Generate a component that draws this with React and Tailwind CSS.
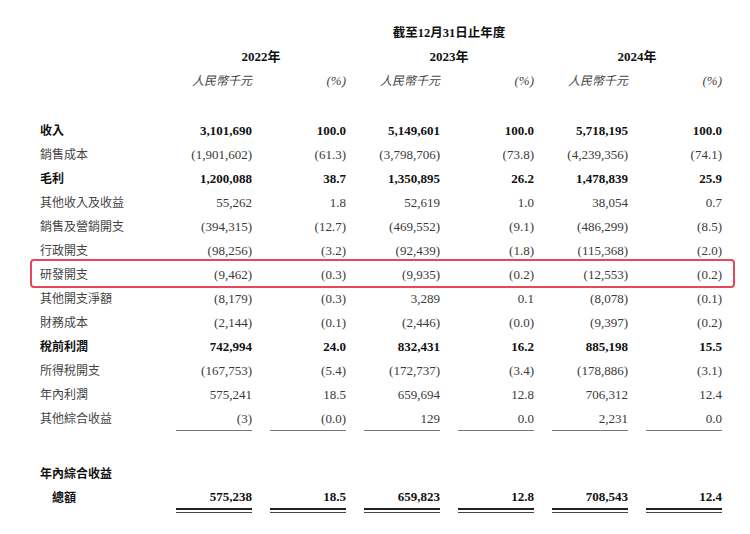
import React from "react";

const rows = [
  { label: "收入", bold: true, v: ["3,101,690", "100.0", "5,149,601", "100.0", "5,718,195", "100.0"] },
  { label: "銷售成本", v: ["(1,901,602)", "(61.3)", "(3,798,706)", "(73.8)", "(4,239,356)", "(74.1)"] },
  { label: "毛利", bold: true, v: ["1,200,088", "38.7", "1,350,895", "26.2", "1,478,839", "25.9"] },
  { label: "其他收入及收益", v: ["55,262", "1.8", "52,619", "1.0", "38,054", "0.7"] },
  { label: "銷售及營銷開支", v: ["(394,315)", "(12.7)", "(469,552)", "(9.1)", "(486,299)", "(8.5)"] },
  { label: "行政開支", v: ["(98,256)", "(3.2)", "(92,439)", "(1.8)", "(115,368)", "(2.0)"] },
  { label: "研發開支", box: true, v: ["(9,462)", "(0.3)", "(9,935)", "(0.2)", "(12,553)", "(0.2)"] },
  { label: "其他開支淨額", v: ["(8,179)", "(0.3)", "3,289", "0.1", "(8,078)", "(0.1)"] },
  { label: "財務成本", v: ["(2,144)", "(0.1)", "(2,446)", "(0.0)", "(9,397)", "(0.2)"] },
  { label: "稅前利潤", bold: true, v: ["742,994", "24.0", "832,431", "16.2", "885,198", "15.5"] },
  { label: "所得稅開支", v: ["(167,753)", "(5.4)", "(172,737)", "(3.4)", "(178,886)", "(3.1)"] },
  { label: "年內利潤", v: ["575,241", "18.5", "659,694", "12.8", "706,312", "12.4"] },
  { label: "其他綜合收益", under: true, v: ["(3)", "(0.0)", "129", "0.0", "2,231", "0.0"] },
];

const total = ["575,238", "18.5", "659,823", "12.8", "708,543", "12.4"];

const grid = "grid w-[682px] grid-cols-[118px_repeat(6,76px)] gap-x-[18px]";

export default function App() {
  return (
    <div
      className="w-[750px] h-[534px] bg-white overflow-hidden text-[#3a3a3a]"
      style={{ fontFamily: '"Liberation Serif", "Noto Sans CJK TC", serif' }}
    >
      <div className="pl-[40px] pt-[21px]">
        {/* header */}
        <div className={grid + " h-[24px] items-center"}>
          <div />
          <div className="col-span-6 text-center font-bold text-[12.5px] text-[#111]">截至12月31日止年度</div>
        </div>
        <div className={grid + " h-[24px] items-center"}>
          <div />
          {["2022年", "2023年", "2024年"].map((y) => (
            <div key={y} className="col-span-2 text-center font-bold text-[13px] text-[#111]">
              {y}
            </div>
          ))}
        </div>
        <div className={grid + " h-[24px] items-center"}>
          <div />
          {[0, 1, 2].map((i) => (
            <React.Fragment key={i}>
              <div className="text-right italic text-[12px] text-[#444]">人民幣千元</div>
              <div className="text-right italic text-[13px] text-[#444]">(%)</div>
            </React.Fragment>
          ))}
        </div>

        {/* data */}
        <div className="mt-[26px]">
          {rows.map((r) => (
            <div key={r.label} className={grid + " h-[24px] items-stretch relative"}>
              {r.box && (
                <div className="absolute left-[-10px] right-[-13px] top-[-4px] bottom-[-1px] border-2 border-[#e5485b] rounded-[4px]" />
              )}
              <div
                className={
                  "flex items-center text-[12px] " + (r.bold ? "font-bold text-[#111]" : "text-[#444]")
                }
              >
                {r.label}
              </div>
              {r.v.map((x, i) => (
                <div
                  key={i}
                  className={
                    "flex items-center justify-end text-[13px] " +
                    (r.bold ? "font-bold text-[#111] " : "text-[#3a3a3a] ") +
                    (r.under ? "border-b border-[#777]" : "")
                  }
                >
                  {x}
                </div>
              ))}
            </div>
          ))}
        </div>

        {/* total */}
        <div className="mt-[31px]">
          <div className={grid + " h-[24px] items-center"}>
            <div className="text-[12px] font-bold text-[#111]">年內綜合收益</div>
          </div>
          <div className={grid + " h-[24px] items-stretch"}>
            <div className="flex items-center pl-[12px] text-[12px] font-bold text-[#111]">總額</div>
            {total.map((x, i) => (
              <div
                key={i}
                className="flex items-center justify-end text-[13px] font-bold text-[#111] border-b-2 border-[#222]"
              >
                {x}
              </div>
            ))}
          </div>
          <div className={grid + " mt-[2px]"}>
            <div />
            {total.map((x, i) => (
              <div key={i} className="h-[1px] bg-[#444]" />
            ))}
          </div>
        </div>
      </div>
    </div>
  );
}
